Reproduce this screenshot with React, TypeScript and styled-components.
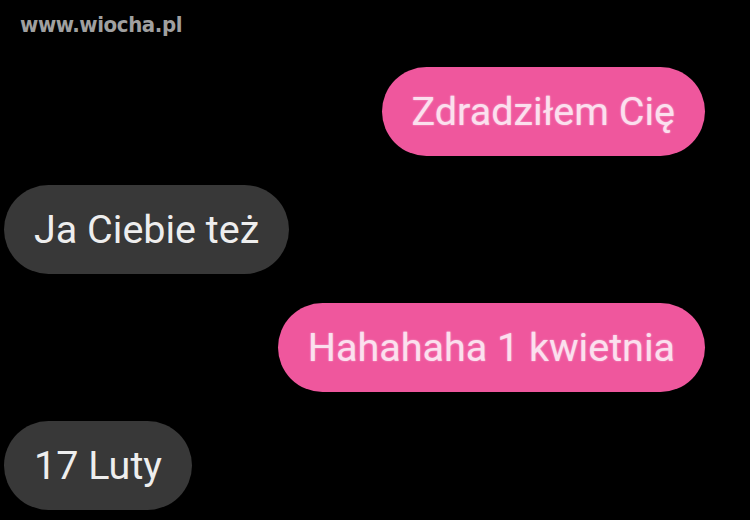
import React from "react";
import styled, { createGlobalStyle } from "styled-components";

const Global = createGlobalStyle`
  html, body { margin: 0; padding: 0; background: #000; }
  body { width: 750px; height: 520px; overflow: hidden; }
`;

const Page = styled.div`
  width: 750px;
  height: 520px;
  background: #000;
  box-sizing: border-box;
  padding: 12px 45px 0 4px;
  display: flex;
  flex-direction: column;
  font-family: Roboto, "Liberation Sans", sans-serif;
`;

const Watermark = styled.div`
  font-family: "DejaVu Sans Condensed", "DejaVu Sans", sans-serif;
  font-stretch: condensed;
  font-weight: bold;
  font-size: 22px;
  color: #a0a0a0;
  margin-left: 16px;
  line-height: 26px;
  letter-spacing: -0.4px;
`;

const Thread = styled.div`
  display: flex;
  flex-direction: column;
  gap: 29px;
  margin-top: 29px;
`;

const Bubble = styled.div<{ $mine?: boolean }>`
  align-self: ${(p) => (p.$mine ? "flex-end" : "flex-start")};
  height: 89px;
  box-sizing: border-box;
  padding: 0 30px;
  border-radius: 45px;
  display: flex;
  align-items: center;
  font-size: 39.5px;
  background: ${(p) => (p.$mine ? "#ef579d" : "#383838")};
  color: ${(p) => (p.$mine ? "#fbe0ee" : "#eeeeee")};
  text-shadow: ${(p) => (p.$mine ? "0 0 2px rgba(255,230,245,0.6)" : "none")};
  white-space: nowrap;
`;

export default function App() {
  return (
    <>
      <Global />
      <Page>
        <Watermark>www.wiocha.pl</Watermark>
        <Thread>
          <Bubble $mine>Zdradziłem Cię</Bubble>
          <Bubble>Ja Ciebie też</Bubble>
          <Bubble $mine>Hahahaha 1 kwietnia</Bubble>
          <Bubble>17 Luty</Bubble>
        </Thread>
      </Page>
    </>
  );
}
